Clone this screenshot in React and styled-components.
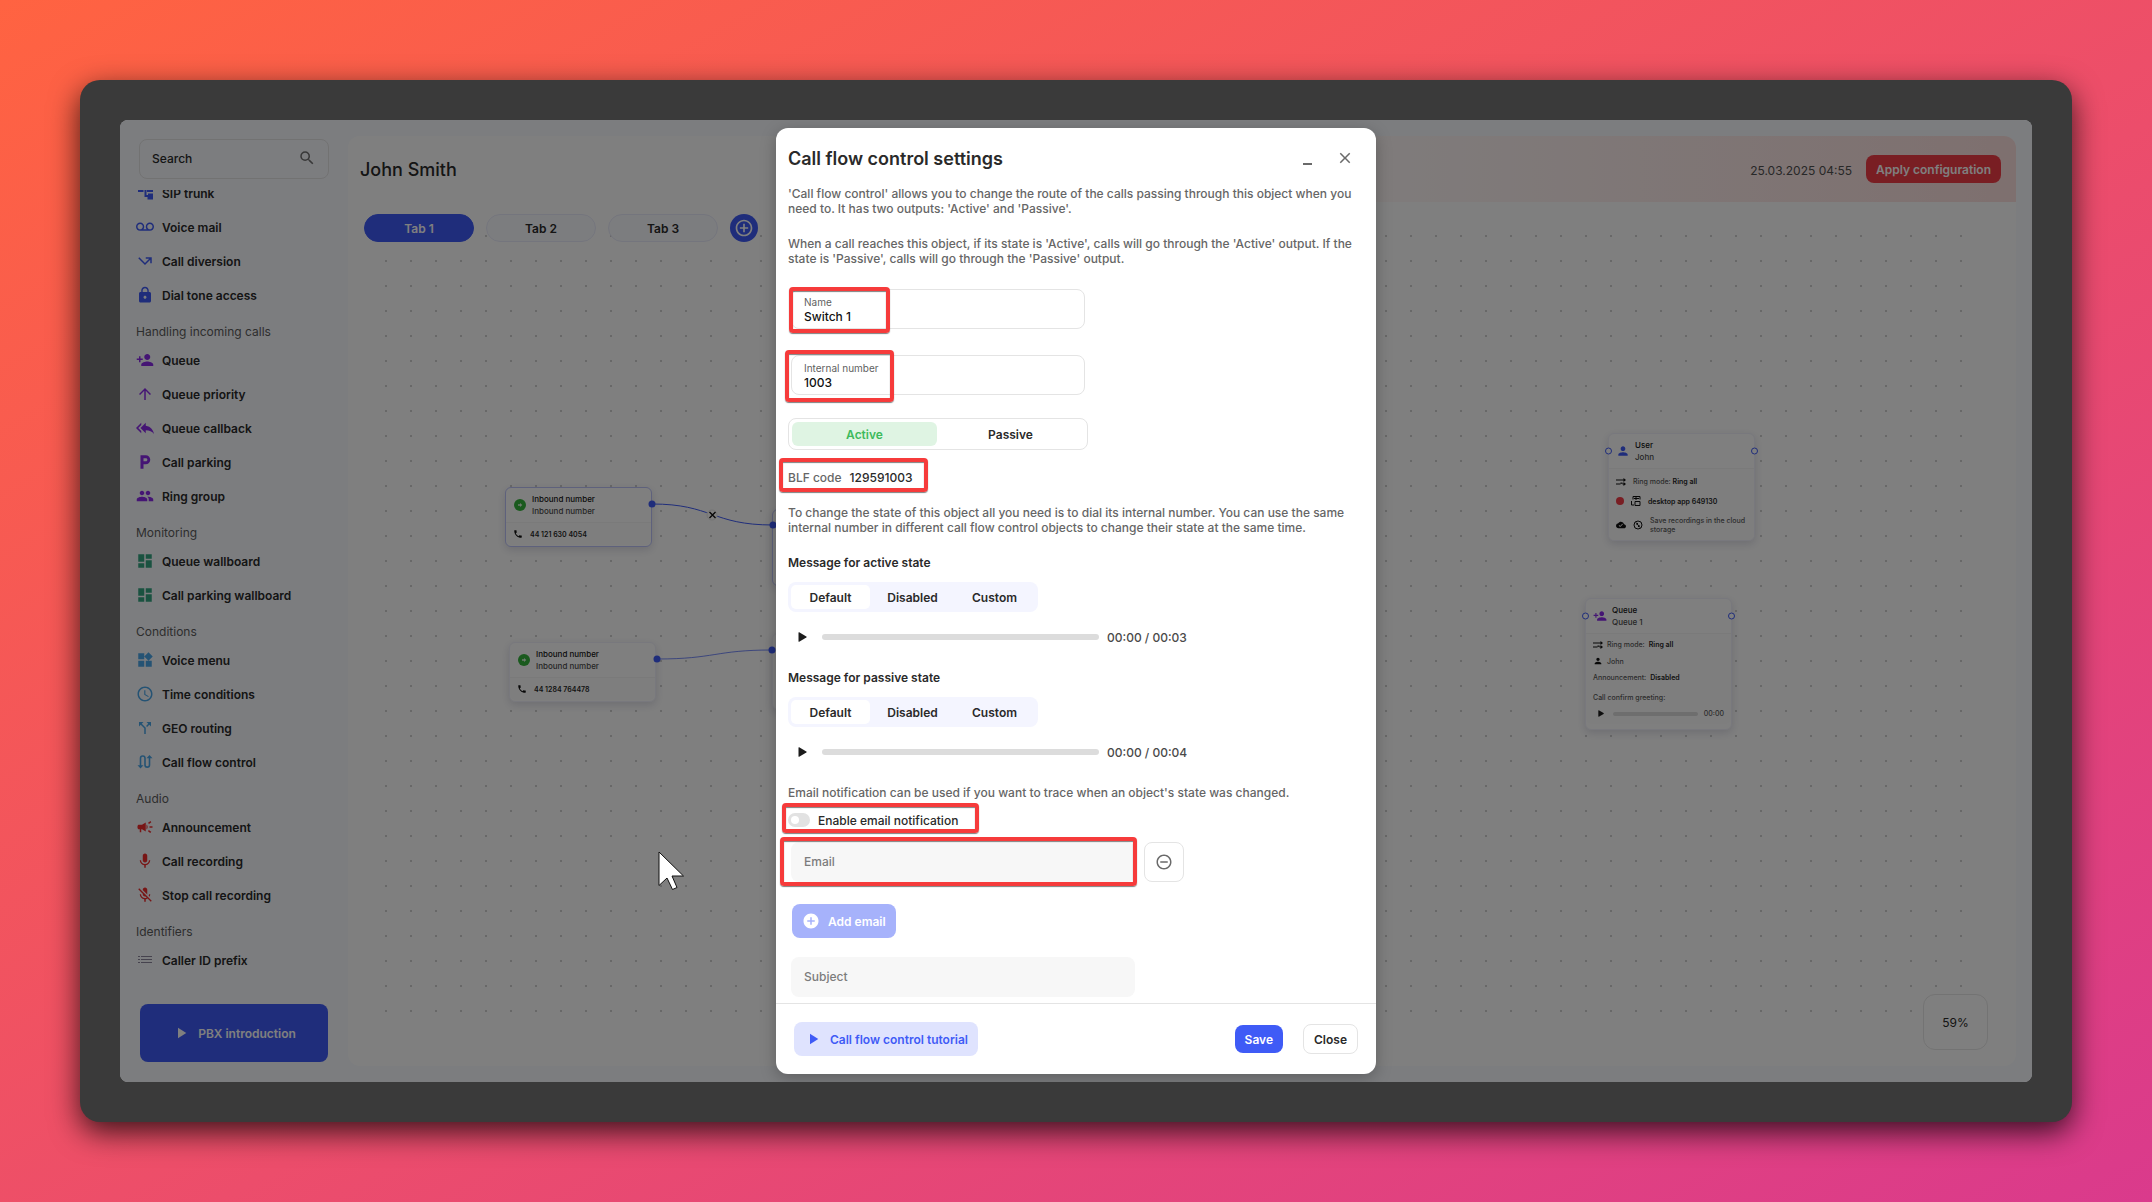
import { useState } from 'react'
import styled, { createGlobalStyle, css } from 'styled-components'
import {
  MdAccessTime,
  MdAddCircle,
  MdArrowUpward,
  MdCallMissedOutgoing,
  MdCallSplit,
  MdCampaign,
  MdClose,
  MdCloudDone,
  MdControlPoint,
  MdDashboard,
  MdGroup,
  MdLocalParking,
  MdLock,
  MdMic,
  MdMicOff,
  MdPerson,
  MdPersonAdd,
  MdPhone,
  MdPlayArrow,
  MdRemoveCircleOutline,
  MdReplyAll,
  MdSearch,
  MdVoicemail,
  MdWidgets,
} from 'react-icons/md'

const GlobalStyle = createGlobalStyle`
  :root {
    --blue: #3f5bf6;
    --purple: #8a2be8;
    --red: #f33c46;
    --border: #e4e4e4;
    --text: #2a2a2a;
    --muted: #5f5f5f;
  }
  * {
    box-sizing: border-box;
  }
  body {
    margin: 0;
    font-family: Inter, "Liberation Sans", sans-serif;
    font-size: 12px;
    color: var(--text);
  }
  button, input {
    font: inherit;
    color: inherit;
  }
  button {
    cursor: pointer;
  }
  p, h1, h2, h3 {
    margin: 0;
  }
  svg {
    display: block;
    flex-shrink: 0;
  }
`

const Page = styled.div`
  min-height: 100vh;
  padding: 80px;
  display: flex;
  background: linear-gradient(to bottom right, #ff6341, #ec4d6b 55%, #da3a8c);
`

const Frame = styled.div`
  flex: 1;
  display: flex;
  padding: 40px;
  border-radius: 20px;
  background-color: #3a3a3a;
  box-shadow: 0 10px 30px rgba(0, 0, 0, 0.75);
`

const Screen = styled.div`
  flex: 1;
  position: relative;
  display: grid;
  grid-template-columns: 228px 1fr;
  border-radius: 8px;
  overflow: hidden;
  background-color: #f8faff;
`

/* Sidebar */

const Sidebar = styled.aside`
  display: flex;
  flex-direction: column;
  padding: 19px 19px 20px;
  min-height: 0;
`

const SearchBox = styled.label`
  display: flex;
  align-items: center;
  justify-content: space-between;
  height: 40px;
  padding: 0 12px 2px;
  border: 1px solid var(--border);
  border-radius: 8px;
  color: #707070;
  input {
    width: 120px;
    border: 0;
    outline: 0;
    padding: 0;
    background: none;
    font-weight: 500;
    color: var(--text);
  }
  input::placeholder {
    color: var(--text);
    opacity: 1;
  }
`

const NavScroll = styled.nav`
  flex: 1;
  min-height: 0;
  margin: 11px 0 20px -3px;
  overflow: hidden;
`

const NavList = styled.ul`
  list-style: none;
  margin: 0;
  padding: 0;
  &:first-child {
    margin-top: -14px;
  }
`

const NavHeading = styled.h3`
  height: 31px;
  padding-top: 12px;
  font-size: 12px;
  line-height: 15px;
  font-weight: 400;
  color: #5c5c5c;
`

const NavLink = styled.a`
  display: flex;
  align-items: center;
  gap: 8px;
  height: 34px;
  font-weight: 600;
  color: var(--text);
  text-decoration: none;
  white-space: nowrap;
  svg {
    color: ${(props) => props.$color};
  }
`

const IntroButton = styled.button`
  display: flex;
  align-items: center;
  justify-content: center;
  gap: 8px;
  height: 58px;
  margin: 0 1px;
  border: 0;
  border-radius: 8px;
  background-color: var(--blue);
  color: #fff;
  font-weight: 600;
`

/* Main panel */

const Main = styled.main`
  margin: 16px 16px 16px 0;
  display: flex;
  flex-direction: column;
  border-radius: 12px;
  overflow: hidden;
  background-color: #fff;
`

const MainHeader = styled.header`
  display: flex;
  align-items: center;
  height: 66px;
  padding: 0 15px 0 12px;
  background: linear-gradient(to right, #fff 50%, #fde0de);
  h1 {
    flex: 1;
    font-size: 18px;
    font-weight: 500;
  }
`

const UpdatedAt = styled.time`
  margin-right: 14px;
  padding-top: 2px;
  color: #505050;
`

const Button = styled.button`
  display: flex;
  align-items: center;
  justify-content: center;
  gap: 8px;
  height: 28px;
  padding: 0 10px;
  border: 0;
  border-radius: 8px;
  background-color: var(--blue);
  color: #fff;
  font-weight: 600;
  white-space: nowrap;
  ${(props) => props.$danger && css`
    background-color: var(--red);
  `}
  ${(props) => props.$outlined && css`
    height: 30px;
    border: 1px solid var(--border);
    background-color: #fff;
    color: var(--text);
  `}
  ${(props) => props.$tall && css`
    height: 34px;
  `}
  ${(props) => props.$soft && css`
    background-color: #dfe3fe;
    color: var(--blue);
  `}
  &:disabled {
    background-color: #a6b2fb;
  }
`

const Workspace = styled.section`
  flex: 1;
  position: relative;
  padding: 12px 16px;
  &::before {
    content: '';
    position: absolute;
    inset: 22px 43px 42px 25px;
    background-image: radial-gradient(circle at 13px 12px, #d0d0d0 1px, transparent 1px);
    background-size: 25px 25px;
  }
`

const Tabs = styled.div`
  position: relative;
  display: flex;
  gap: 12px;
`

const Tab = styled.button`
  width: 110px;
  height: 28px;
  border: 1px solid #e9ebfa;
  border-radius: 14px;
  background-color: #f9faff;
  font-weight: 600;
  ${(props) => props.$active && css`
    border-color: var(--blue);
    background-color: var(--blue);
    color: #fff;
  `}
`

const AddTab = styled.button`
  display: grid;
  place-items: center;
  width: 28px;
  height: 28px;
  padding: 0;
  border: 0;
  border-radius: 50%;
  background-color: var(--blue);
  color: #fff;
`

const ZoomLevel = styled.div`
  position: absolute;
  right: 28px;
  bottom: 16px;
  display: grid;
  place-items: center;
  width: 65px;
  height: 56px;
  border: 1px solid #e6e6e6;
  border-radius: 12px;
  background-color: #fff;
`

/* Diagram */

const Edges = styled.svg`
  position: absolute;
  left: 0;
  top: 0;
  width: 100%;
  height: 100%;
  fill: none;
  stroke: var(--blue);
`

const NodeCard = styled.article`
  position: absolute;
  left: ${(props) => props.$x}px;
  top: ${(props) => props.$y}px;
  width: 147px;
  min-height: ${(props) => props.$height || 60}px;
  border: 1px solid ${(props) => (props.$active ? '#bcc3f8' : '#f1f1fa')};
  border-radius: 6px;
  background-color: #fff;
  box-shadow: 0 3px 8px rgba(40, 40, 90, 0.16);
  font-weight: 500;
`

const NodeHead = styled.div`
  display: flex;
  align-items: center;
  gap: 5px;
  height: 34px;
  padding: 0 7px;
  font-size: 8px;
  line-height: 12px;
  strong {
    display: block;
    font-weight: 500;
    color: #141414;
  }
  span {
    color: #4c4c4c;
  }
`

const NodeBody = styled.div`
  display: flex;
  flex-direction: column;
  gap: ${(props) => props.$gap || 0}px;
  padding: ${(props) => props.$top || 6}px 7px 6px;
  border-top: 1px solid #f4f4f4;
  border-radius: 0 0 6px 6px;
  background-color: #fdfdfd;
  font-size: 7px;
  line-height: 9px;
`

const NodeLine = styled.div`
  display: flex;
  align-items: center;
  gap: ${(props) => (props.$tight ? 4 : 7)}px;
  margin-top: ${(props) => (props.$spaced ? 4 : 0)}px;
  color: #5a5a5a;
  b {
    font-weight: 600;
    color: #262626;
  }
`

const Port = styled.i`
  position: absolute;
  top: 17px;
  ${(props) => props.$side}: -4px;
  width: 7px;
  height: 7px;
  transform: translateY(-50%);
  border: 1px solid var(--blue);
  border-radius: 50%;
  background-color: #fff;
`

const GreenDot = styled.i`
  display: grid;
  place-items: center;
  width: 12px;
  height: 12px;
  margin: 0 1px;
  border-radius: 50%;
  background-color: #35b53c;
`

const RecordDot = styled.i`
  width: 8px;
  height: 8px;
  border-radius: 50%;
  background-color: var(--red);
`

const NodePlayer = styled(NodeLine)`
  padding-left: 5px;
  gap: 6px;
  svg {
    margin-right: 3px;
    color: #1c1c1c;
  }
`

const NodeTrack = styled.i`
  flex: 1;
  height: 4px;
  border-radius: 2px;
  background-color: #dcdcdc;
`

/* Dialog */

const Overlay = styled.div`
  position: absolute;
  inset: 0;
  display: flex;
  justify-content: center;
  padding: 8px;
  background-color: rgba(0, 0, 0, 0.5);
`

const Dialog = styled.section`
  display: flex;
  flex-direction: column;
  width: 600px;
  border-radius: 12px;
  background-color: #fff;
  box-shadow: 0 4px 16px rgba(0, 0, 0, 0.25);
`

const DialogHeader = styled.header`
  display: flex;
  align-items: center;
  gap: 16px;
  height: 58px;
  padding: 2px 20px 0 12px;
  h2 {
    flex: 1;
    font-size: 18px;
    font-weight: 600;
  }
`

const IconButton = styled.button`
  display: grid;
  place-items: center;
  width: 22px;
  height: 22px;
  padding: 0;
  border: 0;
  background: none;
  color: #6a6a6a;
`

const DialogBody = styled.div`
  flex: 1;
  display: flex;
  flex-direction: column;
  align-items: flex-start;
  padding: 0 12px 6px;
`

const Paragraph = styled.p`
  margin-bottom: 20px;
  font-weight: 500;
  line-height: 15px;
  color: #666;
`

const Marked = styled.div`
  position: relative;
`

const Highlight = styled.span`
  position: absolute;
  inset: ${(props) => props.$inset};
  width: ${(props) => (props.$width ? `${props.$width}px` : 'auto')};
  height: ${(props) => (props.$height ? `${props.$height}px` : 'auto')};
  border: 4px solid #f63b3b;
  border-radius: 4px;
  box-shadow: 0 1px 1px rgba(0, 0, 0, 0.5), inset 0 1px 1px rgba(0, 0, 0, 0.5);
  pointer-events: none;
`

const Field = styled.label`
  display: flex;
  flex-direction: column;
  width: 294px;
  height: 40px;
  margin: 3px 3px 23px;
  padding: 5px 12px;
  border: 1px solid var(--border);
  border-radius: 8px;
  font-size: 10px;
  line-height: 14px;
  color: var(--muted);
  input {
    width: 100%;
    padding: 0;
    border: 0;
    outline: 0;
    background: none;
    font-size: 12px;
    line-height: 15px;
    font-weight: 500;
    color: #111;
  }
`

const StateSwitch = styled.div`
  display: grid;
  grid-template-columns: 145px 1fr;
  width: 300px;
  height: 32px;
  margin-bottom: 20px;
  padding: 3px;
  border: 1px solid var(--border);
  border-radius: 8px;
`

const StateOption = styled.button`
  border: 0;
  border-radius: 6px;
  background-color: ${(props) => (props.$active ? '#dff4e3' : 'transparent')};
  color: ${(props) => (props.$active ? '#3dba5c' : 'inherit')};
  font-weight: 600;
`

const BlfCode = styled.div`
  display: flex;
  gap: 8px;
  margin-bottom: 19px;
  font-weight: 500;
  line-height: 16px;
  color: #666;
  span {
    color: var(--text);
  }
`

const SubHeading = styled.h3`
  margin-bottom: 11px;
  font-size: 12px;
  line-height: 16px;
  font-weight: 600;
`

const Segments = styled.div`
  display: flex;
  gap: 3px;
  width: 250px;
  margin-bottom: 15px;
  padding: 3px;
  border-radius: 8px;
  background-color: #f4f5ff;
`

const Segment = styled.button`
  width: 79px;
  height: 24px;
  padding: 0;
  border: 0;
  border-radius: 5px;
  background-color: ${(props) => (props.$active ? '#fff' : 'transparent')};
  font-weight: 600;
`

const Player = styled.div`
  display: flex;
  align-items: center;
  height: 20px;
  margin-bottom: 23px;
  font-weight: 500;
  color: #4a4a4a;
  button {
    width: 34px;
    padding-left: 10px;
    justify-items: start;
    color: #1c1c1c;
  }
  input {
    appearance: none;
    width: 277px;
    height: 6px;
    margin: 0 8px 0 0;
    border-radius: 3px;
    background-color: #dcdcdc;
  }
  input::-webkit-slider-thumb {
    appearance: none;
    width: 0;
    height: 0;
  }
`

const ToggleRow = styled(Marked)`
  margin: -10px 0 12px;
`

const Toggle = styled.label`
  display: flex;
  align-items: center;
  gap: 8px;
  height: 20px;
  font-weight: 500;
  input {
    appearance: none;
    width: 22px;
    height: 14px;
    margin: 0;
    padding: 3px;
    border-radius: 7px;
    background-color: #e2e2e2;
  }
  input::before {
    content: '';
    display: block;
    width: 8px;
    height: 8px;
    border-radius: 50%;
    background-color: #fff;
  }
  input:checked {
    background-color: var(--blue);
  }
  input:checked::before {
    margin-left: auto;
  }
`

const EmailRow = styled.div`
  display: flex;
  gap: 9px;
  margin: 0 3px 22px;
`

const TextInput = styled.input`
  display: block;
  width: 344px;
  height: 40px;
  padding: 0 13px 2px;
  border: 0;
  border-radius: 8px;
  background-color: #f7f7f7;
  font-weight: 500;
  &::placeholder {
    color: #7c7c7c;
    opacity: 1;
  }
`

const RemoveButton = styled(IconButton)`
  width: 40px;
  height: 40px;
  border: 1px solid var(--border);
  border-radius: 8px;
`

const AddEmailRow = styled.div`
  margin: 0 4px 19px;
`

const SubjectRow = styled.div`
  margin: 0 3px;
`

const DialogFooter = styled.footer`
  display: flex;
  align-items: center;
  gap: 20px;
  height: 71px;
  padding: 0 18px;
  border-top: 1px solid var(--border);
`

const Spacer = styled.div`
  flex: 1;
`

const Pointer = styled.svg`
  position: absolute;
  left: 538px;
  top: 731px;
`

const PlayGlyph = ({ size = 9 }) => (
  <svg width={size} height={size + 1} viewBox="0 0 9 10" fill="currentColor">
    <path d="M1.200.2 8.300 4.400q.8.6 0 1.200L1.200 9.800Q.5 10 .5 9.200V.8Q.5 0 1.200.2Z" />
  </svg>
)

const TrunkIcon = () => (
  <svg width="18" height="18" viewBox="0 0 18 18" fill="currentColor">
    <path d="M2 2h5.500v6H2zM11 2h6v6h-6zM8.500 6h2v5h1.500V9.500h5v6h-5.500V13h-3z" />
  </svg>
)

const FlowIcon = () => (
  <svg width="18" height="18" viewBox="0 0 18 18" fill="none" stroke="currentColor" strokeWidth="1.6">
    <path d="M4.500 13V5.300a2.200 2.200 0 0 1 4.500 0v6.600a2.200 2.200 0 0 0 4.500 0V4" />
    <path d="M4.500 15.500 1.500 12.200h6zM13.500 2l3 3.300h-6z" fill="currentColor" stroke="none" />
  </svg>
)

const PrefixIcon = () => (
  <svg width="18" height="18" viewBox="0 0 18 18" stroke="currentColor">
    <path d="M2 5.500h2M2 8.500h2M2 11.500h2M5 5.500h11M5 8.500h11M5 11.500h11" />
  </svg>
)

const RingModeIcon = () => (
  <svg width="10" height="8" viewBox="0 0 10 8" fill="none" stroke="#111">
    <path d="M0 2h8M0 6h4.500L6 4.500M5 4.500 6.500 6H8" />
    <path d="M7.500 0 10 2 7.500 4zM7.500 4 10 6 7.500 8z" fill="#111" stroke="none" />
  </svg>
)

const DeviceIcon = () => (
  <svg width="10" height="10" viewBox="0 0 10 10" fill="none" stroke="#111">
    <path d="M2 3.500v-3h7v3M.500 5v4H3M4 5.500h5v4H4zM3 2.500h5M5 1v3" />
  </svg>
)

const CompassIcon = () => (
  <svg width="10" height="10" viewBox="0 0 10 10" fill="none" stroke="#111">
    <circle cx="5" cy="5" r="4" />
    <path d="M3 2.500 7 7.500M3.500 4.500 5 3M5 7l1.500-1.500" />
  </svg>
)

const NAV = [
  {
    items: [
      ['SIP trunk', TrunkIcon],
      ['Voice mail', MdVoicemail],
      ['Call diversion', MdCallMissedOutgoing],
      ['Dial tone access', MdLock],
    ],
    color: 'var(--blue)',
  },
  {
    title: 'Handling incoming calls',
    items: [
      ['Queue', MdPersonAdd],
      ['Queue priority', MdArrowUpward],
      ['Queue callback', MdReplyAll],
      ['Call parking', MdLocalParking],
      ['Ring group', MdGroup],
    ],
    color: 'var(--purple)',
  },
  {
    title: 'Monitoring',
    items: [
      ['Queue wallboard', MdDashboard],
      ['Call parking wallboard', MdDashboard],
    ],
    color: '#34a581',
  },
  {
    title: 'Conditions',
    items: [
      ['Voice menu', MdWidgets],
      ['Time conditions', MdAccessTime],
      ['GEO routing', MdCallSplit],
      ['Call flow control', FlowIcon],
    ],
    color: '#4ba7e8',
  },
  {
    title: 'Audio',
    items: [
      ['Announcement', MdCampaign],
      ['Call recording', MdMic],
      ['Stop call recording', MdMicOff],
    ],
    color: '#f02c2c',
  },
  {
    title: 'Identifiers',
    items: [['Caller ID prefix', PrefixIcon]],
    color: '#8d869c',
  },
]

function SidebarNav() {
  return (
    <NavScroll>
      {NAV.map(({ title, items, color }) => (
        <div key={title || 'top'}>
          {title && <NavHeading>{title}</NavHeading>}
          <NavList>
            {items.map(([label, Icon]) => (
              <li key={label}>
                <NavLink href="#" $color={color}>
                  <Icon size={18} />
                  {label}
                </NavLink>
              </li>
            ))}
          </NavList>
        </div>
      ))}
    </NavScroll>
  )
}

function InboundNode({ x, y, number, active }) {
  return (
    <NodeCard $x={x} $y={y} $active={active}>
      <NodeHead>
        <GreenDot>
          <svg width="6" height="6" viewBox="0 0 6 6" fill="#dff5e0">
            <path d="M1 2.300h2V1l2.300 2L3 5V3.700H1z" />
          </svg>
        </GreenDot>
        <div>
          <strong>Inbound number</strong>
          <span>Inbound number</span>
        </div>
      </NodeHead>
      <NodeBody>
        <NodeLine>
          <MdPhone size={10} color="#111" />
          <b>{number}</b>
        </NodeLine>
      </NodeBody>
    </NodeCard>
  )
}

function UserNode() {
  return (
    <NodeCard $x={1260} $y={231} $height={108}>
      <NodeHead>
        <MdPerson size={14} color="var(--blue)" />
        <div>
          <strong>User</strong>
          <span>John</span>
        </div>
      </NodeHead>
      <NodeBody $gap={10} $top={8}>
        <NodeLine>
          <RingModeIcon />
          <span>Ring mode: <b>Ring all</b></span>
        </NodeLine>
        <NodeLine>
          <RecordDot />
          <DeviceIcon />
          <b>desktop app 649130</b>
        </NodeLine>
        <NodeLine>
          <MdCloudDone size={10} color="#111" />
          <CompassIcon />
          <span>Save recordings in the cloud storage</span>
        </NodeLine>
      </NodeBody>
      <Port $side="left" />
      <Port $side="right" />
    </NodeCard>
  )
}

function QueueNode() {
  return (
    <NodeCard $x={1237} $y={396} $height={132}>
      <NodeHead>
        <MdPersonAdd size={14} color="var(--purple)" />
        <div>
          <strong>Queue</strong>
          <span>Queue 1</span>
        </div>
      </NodeHead>
      <NodeBody $gap={7}>
        <NodeLine $tight>
          <RingModeIcon />
          Ring mode: <b>Ring all</b>
        </NodeLine>
        <NodeLine $tight>
          <MdPerson size={10} color="#111" />
          John
        </NodeLine>
        <NodeLine $tight>Announcement: <b>Disabled</b></NodeLine>
        <NodeLine $spaced>Call confirm greeting:</NodeLine>
        <NodePlayer>
          <PlayGlyph size={6} />
          <NodeTrack />
          00:00
        </NodePlayer>
      </NodeBody>
      <Port $side="left" />
      <Port $side="right" />
    </NodeCard>
  )
}

function Diagram() {
  return (
    <>
      <NodeCard $x={424} $y={307} $height={77} $active />
      <NodeCard $x={424} $y={431} $height={77} />
      <InboundNode x={157} y={285} number="44 121 630 4054" active />
      <InboundNode x={161} y={440} number="44 1284 764478" />
      <UserNode />
      <QueueNode />
      <Edges>
        <path d="M304 302C364 302 364 323 425 323" />
        <path d="M309 457C367 457 367 448 424 448" opacity="0.7" />
        <circle cx="364" cy="313" r="5" fill="#fff" stroke="#e8e8e8" />
        <path d="M361.500 310l6 6M367.500 310l-6 6" stroke="#111" strokeWidth="1.4" />
        <g fill="var(--blue)" stroke="none">
          <circle cx="304" cy="302" r="3.500" />
          <circle cx="309" cy="457" r="3.500" />
          <circle cx="425" cy="323" r="3.500" />
          <circle cx="424" cy="448" r="3.500" />
        </g>
      </Edges>
    </>
  )
}

function MessageSettings({ state, duration }) {
  const [mode, setMode] = useState('Default')
  return (
    <>
      <SubHeading>Message for {state} state</SubHeading>
      <Segments>
        {['Default', 'Disabled', 'Custom'].map((option) => (
          <Segment
            key={option}
            type="button"
            aria-pressed={mode === option}
            $active={mode === option}
            onClick={() => setMode(option)}
          >
            {option}
          </Segment>
        ))}
      </Segments>
      <Player>
        <IconButton type="button" aria-label="Play">
          <PlayGlyph />
        </IconButton>
        <input type="range" min="0" max="100" defaultValue="0" aria-label={`Position in ${state} message`} />
        00:00 / {duration}
      </Player>
    </>
  )
}

function SettingsDialog() {
  const [active, setActive] = useState(true)
  return (
    <Dialog role="dialog" aria-labelledby="dialog-title">
      <DialogHeader>
        <h2 id="dialog-title">Call flow control settings</h2>
        <IconButton type="button" aria-label="Minimize">
          <svg width="9" height="14" viewBox="0 0 9 14" fill="currentColor">
            <path d="M0 12h9v2H0z" />
          </svg>
        </IconButton>
        <IconButton type="button" aria-label="Close dialog">
          <MdClose size={18} />
        </IconButton>
      </DialogHeader>
      <DialogBody>
        <Paragraph>
          'Call flow control' allows you to change the route of the calls passing through this object when you
          need to. It has two outputs: 'Active' and 'Passive'.
        </Paragraph>
        <Paragraph>
          When a call reaches this object, if its state is 'Active', calls will go through the 'Active' output. If the
          state is 'Passive', calls will go through the 'Passive' output.
        </Paragraph>
        <Marked>
          <Field>
            Name
            <input type="text" defaultValue="Switch 1" />
          </Field>
          <Highlight $inset="1px auto auto 1px" $width={101} $height={46} />
        </Marked>
        <Marked>
          <Field>
            Internal number
            <input type="text" defaultValue="1003" />
          </Field>
          <Highlight $inset="-2px auto auto -3px" $width={109} $height={52} />
        </Marked>
        <StateSwitch>
          <StateOption type="button" $active={active} onClick={() => setActive(true)}>Active</StateOption>
          <StateOption type="button" $active={!active} onClick={() => setActive(false)}>Passive</StateOption>
        </StateSwitch>
        <Marked>
          <BlfCode>
            BLF code <span>129591003</span>
          </BlfCode>
          <Highlight $inset="-12px -16px 13px -9px" />
        </Marked>
        <Paragraph>
          To change the state of this object all you need is to dial its internal number. You can use the same
          internal number in different call flow control objects to change their state at the same time.
        </Paragraph>
        <MessageSettings state="active" duration="00:03" />
        <MessageSettings state="passive" duration="00:04" />
        <Paragraph>Email notification can be used if you want to trace when an object's state was changed.</Paragraph>
        <ToggleRow>
          <Toggle>
            <input type="checkbox" />
            Enable email notification
          </Toggle>
          <Highlight $inset="-7px -21px -3px -6px" />
        </ToggleRow>
        <EmailRow>
          <Marked>
            <TextInput type="email" placeholder="Email" aria-label="Email" />
            <Highlight $inset="-5px -2px -4px -11px" />
          </Marked>
          <RemoveButton type="button" aria-label="Remove email">
            <MdRemoveCircleOutline size={18} />
          </RemoveButton>
        </EmailRow>
        <AddEmailRow>
          <Button type="button" $tall disabled>
            <MdAddCircle size={18} />
            Add email
          </Button>
        </AddEmailRow>
        <SubjectRow>
          <TextInput type="text" placeholder="Subject" aria-label="Subject" />
        </SubjectRow>
      </DialogBody>
      <DialogFooter>
        <Button type="button" $tall $soft>
          <MdPlayArrow size={18} />
          Call flow control tutorial
        </Button>
        <Spacer />
        <Button type="button">Save</Button>
        <Button type="button" $outlined>Close</Button>
      </DialogFooter>
    </Dialog>
  )
}

export default function App() {
  return (
    <Page>
      <GlobalStyle />
      <Frame>
        <Screen>
          <Sidebar>
            <SearchBox>
              <input type="search" placeholder="Search" aria-label="Search" />
              <MdSearch size={18} />
            </SearchBox>
            <SidebarNav />
            <IntroButton type="button">
              <MdPlayArrow size={18} />
              PBX introduction
            </IntroButton>
          </Sidebar>
          <Main>
            <MainHeader>
              <h1>John Smith</h1>
              <UpdatedAt>25.03.2025 04:55</UpdatedAt>
              <Button type="button" $danger>Apply configuration</Button>
            </MainHeader>
            <Workspace>
              <Diagram />
              <Tabs>
                <Tab type="button" $active>Tab 1</Tab>
                <Tab type="button">Tab 2</Tab>
                <Tab type="button">Tab 3</Tab>
                <AddTab type="button" aria-label="Add tab">
                  <MdControlPoint size={20} />
                </AddTab>
              </Tabs>
              <ZoomLevel>59%</ZoomLevel>
            </Workspace>
          </Main>
          <Overlay>
            <SettingsDialog />
            <Pointer width="27" height="40" viewBox="0 0 27 40" fill="#fff" stroke="#111">
              <path d="M1 1v33.500l8-7.500 5.500 11.500 4.500-2-5-11.500h11.500z" />
            </Pointer>
          </Overlay>
        </Screen>
      </Frame>
    </Page>
  )
}
